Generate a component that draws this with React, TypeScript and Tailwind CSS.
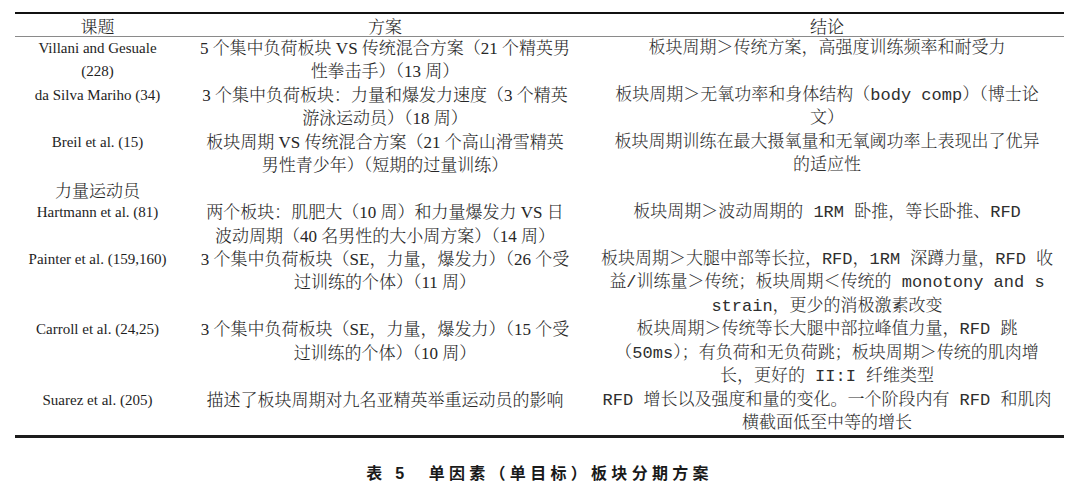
const serifCjk = "font-['Liberation_Serif','Noto_Serif_CJK_SC','Noto_Sans_CJK_SC',serif]";
const monoCjk = "font-['Liberation_Mono','Noto_Serif_CJK_SC','Noto_Sans_CJK_SC',monospace]";

type Row = {
  subject: string[];
  cjkSubject?: boolean;
  plan: string[];
  result: string[];
};

const rows: Row[] = [
  {
    subject: ["Villani and Gesuale", "(228)"],
    plan: ["5 个集中负荷板块 VS 传统混合方案（21 个精英男", "性拳击手）（13 周）"],
    result: ["板块周期＞传统方案，高强度训练频率和耐受力"],
  },
  {
    subject: ["da Silva Mariho (34)"],
    plan: ["3 个集中负荷板块：力量和爆发力速度（3 个精英", "游泳运动员）（18 周）"],
    result: ["板块周期＞无氧功率和身体结构（body comp）（博士论", "文）"],
  },
  {
    subject: ["Breil et al. (15)"],
    plan: ["板块周期 VS 传统混合方案（21 个高山滑雪精英", "男性青少年）（短期的过量训练）"],
    result: ["板块周期训练在最大摄氧量和无氧阈功率上表现出了优异", "的适应性"],
  },
  {
    subject: ["力量运动员"],
    cjkSubject: true,
    plan: [],
    result: [],
  },
  {
    subject: ["Hartmann et al. (81)"],
    plan: ["两个板块：肌肥大（10 周）和力量爆发力 VS 日", "波动周期（40 名男性的大小周方案）（14 周）"],
    result: ["板块周期＞波动周期的 1RM 卧推，等长卧推、RFD"],
  },
  {
    subject: ["Painter et al. (159,160)"],
    plan: ["3 个集中负荷板块（SE，力量，爆发力）（26 个受", "过训练的个体）（11 周）"],
    result: [
      "板块周期＞大腿中部等长拉，RFD，1RM 深蹲力量，RFD 收",
      "益/训练量＞传统；板块周期＜传统的 monotony and s",
      "strain，更少的消极激素改变",
    ],
  },
  {
    subject: ["Carroll et al. (24,25)"],
    plan: ["3 个集中负荷板块（SE，力量，爆发力）（15 个受", "过训练的个体）（10 周）"],
    result: [
      "板块周期＞传统等长大腿中部拉峰值力量，RFD 跳",
      "（50ms）；有负荷和无负荷跳；板块周期＞传统的肌肉增",
      "长，更好的 II:I 纤维类型",
    ],
  },
  {
    subject: ["Suarez et al. (205)"],
    plan: ["描述了板块周期对九名亚精英举重运动员的影响"],
    result: ["RFD 增长以及强度和量的变化。一个阶段内有 RFD 和肌肉", "横截面低至中等的增长"],
  },
];

function Lines({ lines, className }: { lines: string[]; className: string }) {
  return (
    <div className={className}>
      {lines.map((l, i) => (
        <div key={i} className="whitespace-pre text-center">
          {l}
        </div>
      ))}
    </div>
  );
}

export default function App() {
  return (
    <div className="min-h-[497px] w-[1080px] bg-white pt-[12px] text-[#262626]">
      <div className="ml-[15px] w-[1049px]">
        {/* header */}
        <div className="grid h-[25px] grid-cols-[165px_410px_474px] border-t-2 border-b border-t-[#111] border-b-[#8a8a8a] text-[17px] leading-[24px] font-['Noto_Serif_CJK_SC','Noto_Sans_CJK_SC',serif] font-light">
          <div className="text-center">课题</div>
          <div className="text-center">方案</div>
          <div className="text-center">结论</div>
        </div>

        {/* body */}
        <div className="border-b-[3px] border-[#1c1c1c]">
          {rows.map((r, i) => (
            <div key={i} className="grid grid-cols-[165px_410px_474px] items-start leading-[23.44px]">
              <Lines
                lines={r.subject}
                className={
                  r.cjkSubject
                    ? "text-[17px] font-light font-['Noto_Serif_CJK_SC','Noto_Sans_CJK_SC',serif]"
                    : "text-[15px] text-[#1e1e1e] font-['Liberation_Serif',serif]"
                }
              />
              <Lines lines={r.plan} className={`text-[17px] font-light ${serifCjk}`} />
              <Lines lines={r.result} className={`text-[17px] font-light text-[#2e2e2e] ${monoCjk}`} />
            </div>
          ))}
        </div>

        {/* caption */}
        <div className="mt-[24px] text-center text-[16px] leading-[24px] font-bold tracking-[4.3px] text-[#1a1a1a] font-['Liberation_Sans','Noto_Sans_CJK_SC',sans-serif]">
          表 5　单因素（单目标）板块分期方案
        </div>
      </div>
    </div>
  );
}
